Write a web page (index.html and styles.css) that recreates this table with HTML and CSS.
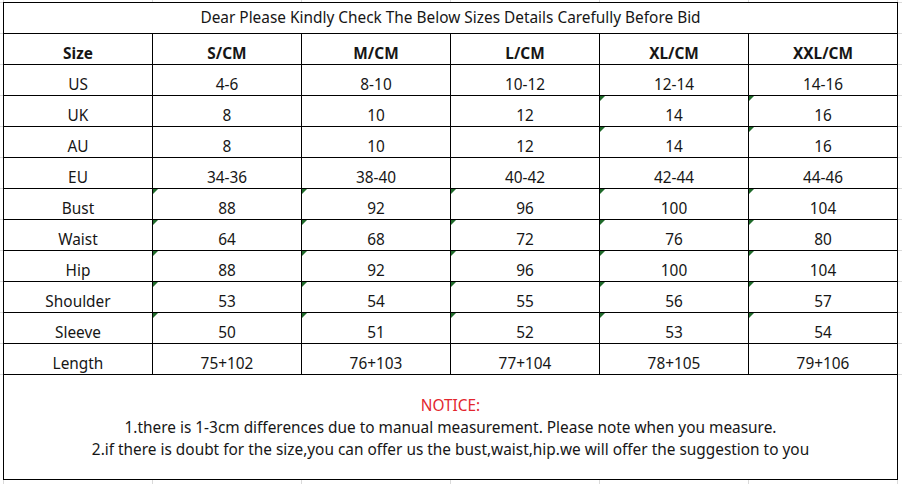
FILE: index.html
```html
<!DOCTYPE html>
<html lang="en">
<head>
<meta charset="utf-8">
<title>Size Chart</title>
<link rel="stylesheet" href="styles.css">
</head>
<body>
<div class="page">
  <div class="sheet">
    <div class="cell title">Dear Please Kindly Check The Below Sizes Details Carefully Before Bid</div>

    <div class="cell head">Size</div>
    <div class="cell head">S/CM</div>
    <div class="cell head">M/CM</div>
    <div class="cell head">L/CM</div>
    <div class="cell head">XL/CM</div>
    <div class="cell head">XXL/CM</div>

    <div class="cell">US</div>
    <div class="cell">4-6</div>
    <div class="cell">8-10</div>
    <div class="cell">10-12</div>
    <div class="cell">12-14</div>
    <div class="cell">14-16</div>

    <div class="cell">UK</div>
    <div class="cell">8</div>
    <div class="cell">10</div>
    <div class="cell">12</div>
    <div class="cell tri">14</div>
    <div class="cell tri">16</div>

    <div class="cell">AU</div>
    <div class="cell">8</div>
    <div class="cell">10</div>
    <div class="cell">12</div>
    <div class="cell tri">14</div>
    <div class="cell tri">16</div>

    <div class="cell">EU</div>
    <div class="cell">34-36</div>
    <div class="cell">38-40</div>
    <div class="cell">40-42</div>
    <div class="cell">42-44</div>
    <div class="cell">44-46</div>

    <div class="cell">Bust</div>
    <div class="cell tri">88</div>
    <div class="cell tri">92</div>
    <div class="cell tri">96</div>
    <div class="cell tri">100</div>
    <div class="cell tri">104</div>

    <div class="cell">Waist</div>
    <div class="cell tri">64</div>
    <div class="cell tri">68</div>
    <div class="cell tri">72</div>
    <div class="cell tri">76</div>
    <div class="cell tri">80</div>

    <div class="cell">Hip</div>
    <div class="cell tri">88</div>
    <div class="cell tri">92</div>
    <div class="cell tri">96</div>
    <div class="cell tri">100</div>
    <div class="cell tri">104</div>

    <div class="cell">Shoulder</div>
    <div class="cell tri">53</div>
    <div class="cell tri">54</div>
    <div class="cell tri">55</div>
    <div class="cell tri">56</div>
    <div class="cell tri">57</div>

    <div class="cell">Sleeve</div>
    <div class="cell tri">50</div>
    <div class="cell tri">51</div>
    <div class="cell tri">52</div>
    <div class="cell tri">53</div>
    <div class="cell tri">54</div>

    <div class="cell">Length</div>
    <div class="cell">75+102</div>
    <div class="cell">76+103</div>
    <div class="cell">77+104</div>
    <div class="cell">78+105</div>
    <div class="cell">79+106</div>

    <div class="cell notes">
      <p class="notice">NOTICE:</p>
      <p>1.there is 1-3cm differences due to manual measurement. Please note when you measure.</p>
      <p>2.if there is doubt for the size,you can offer us the bust,waist,hip.we will offer the suggestion to you</p>
    </div>
  </div>
</div>
</body>
</html>
```

FILE: styles.css
```css
html, body {
  margin: 0;
  padding: 0;
}

body {
  width: 902px;
  height: 484px;
  overflow: hidden;
  background-color: #ffffff;
  background-image:
    repeating-linear-gradient(90deg, #dadada 0 1px, transparent 1px 149px),
    repeating-linear-gradient(180deg, #dadada 0 1px, transparent 1px 31px);
  background-position: 3px 0, 0 2px;
  background-size: auto, 100% 373px;
  background-repeat: repeat, no-repeat;
  font-family: "Noto Sans", "Open Sans", sans-serif;
  font-size: 15.4px;
  color: #161616;
}

.page {
  padding: 2px 0 0 3px;
}

.sheet {
  display: grid;
  grid-template-columns: repeat(6, 148px);
  grid-template-rows: repeat(12, 30px) 104px;
  gap: 1px;
  padding: 1px;
  background: #000000;
  width: max-content;
}

.cell {
  position: relative;
  background: #ffffff;
  text-align: center;
  box-sizing: border-box;
  padding-top: 9px;
  line-height: 22px;
  white-space: nowrap;
  overflow: hidden;
}

.title {
  grid-column: 1 / -1;
  padding-top: 4px;
}

.head {
  font-weight: 700;
}

.tri::before {
  content: "";
  position: absolute;
  left: 0;
  top: 0;
  width: 0;
  height: 0;
  border-top: 5px solid #1f6a2a;
  border-right: 5px solid transparent;
}

.notes {
  grid-column: 1 / -1;
  padding-top: 20px;
}

.notes p {
  margin: 0;
}

.notice {
  color: #e3262e;
}
```
